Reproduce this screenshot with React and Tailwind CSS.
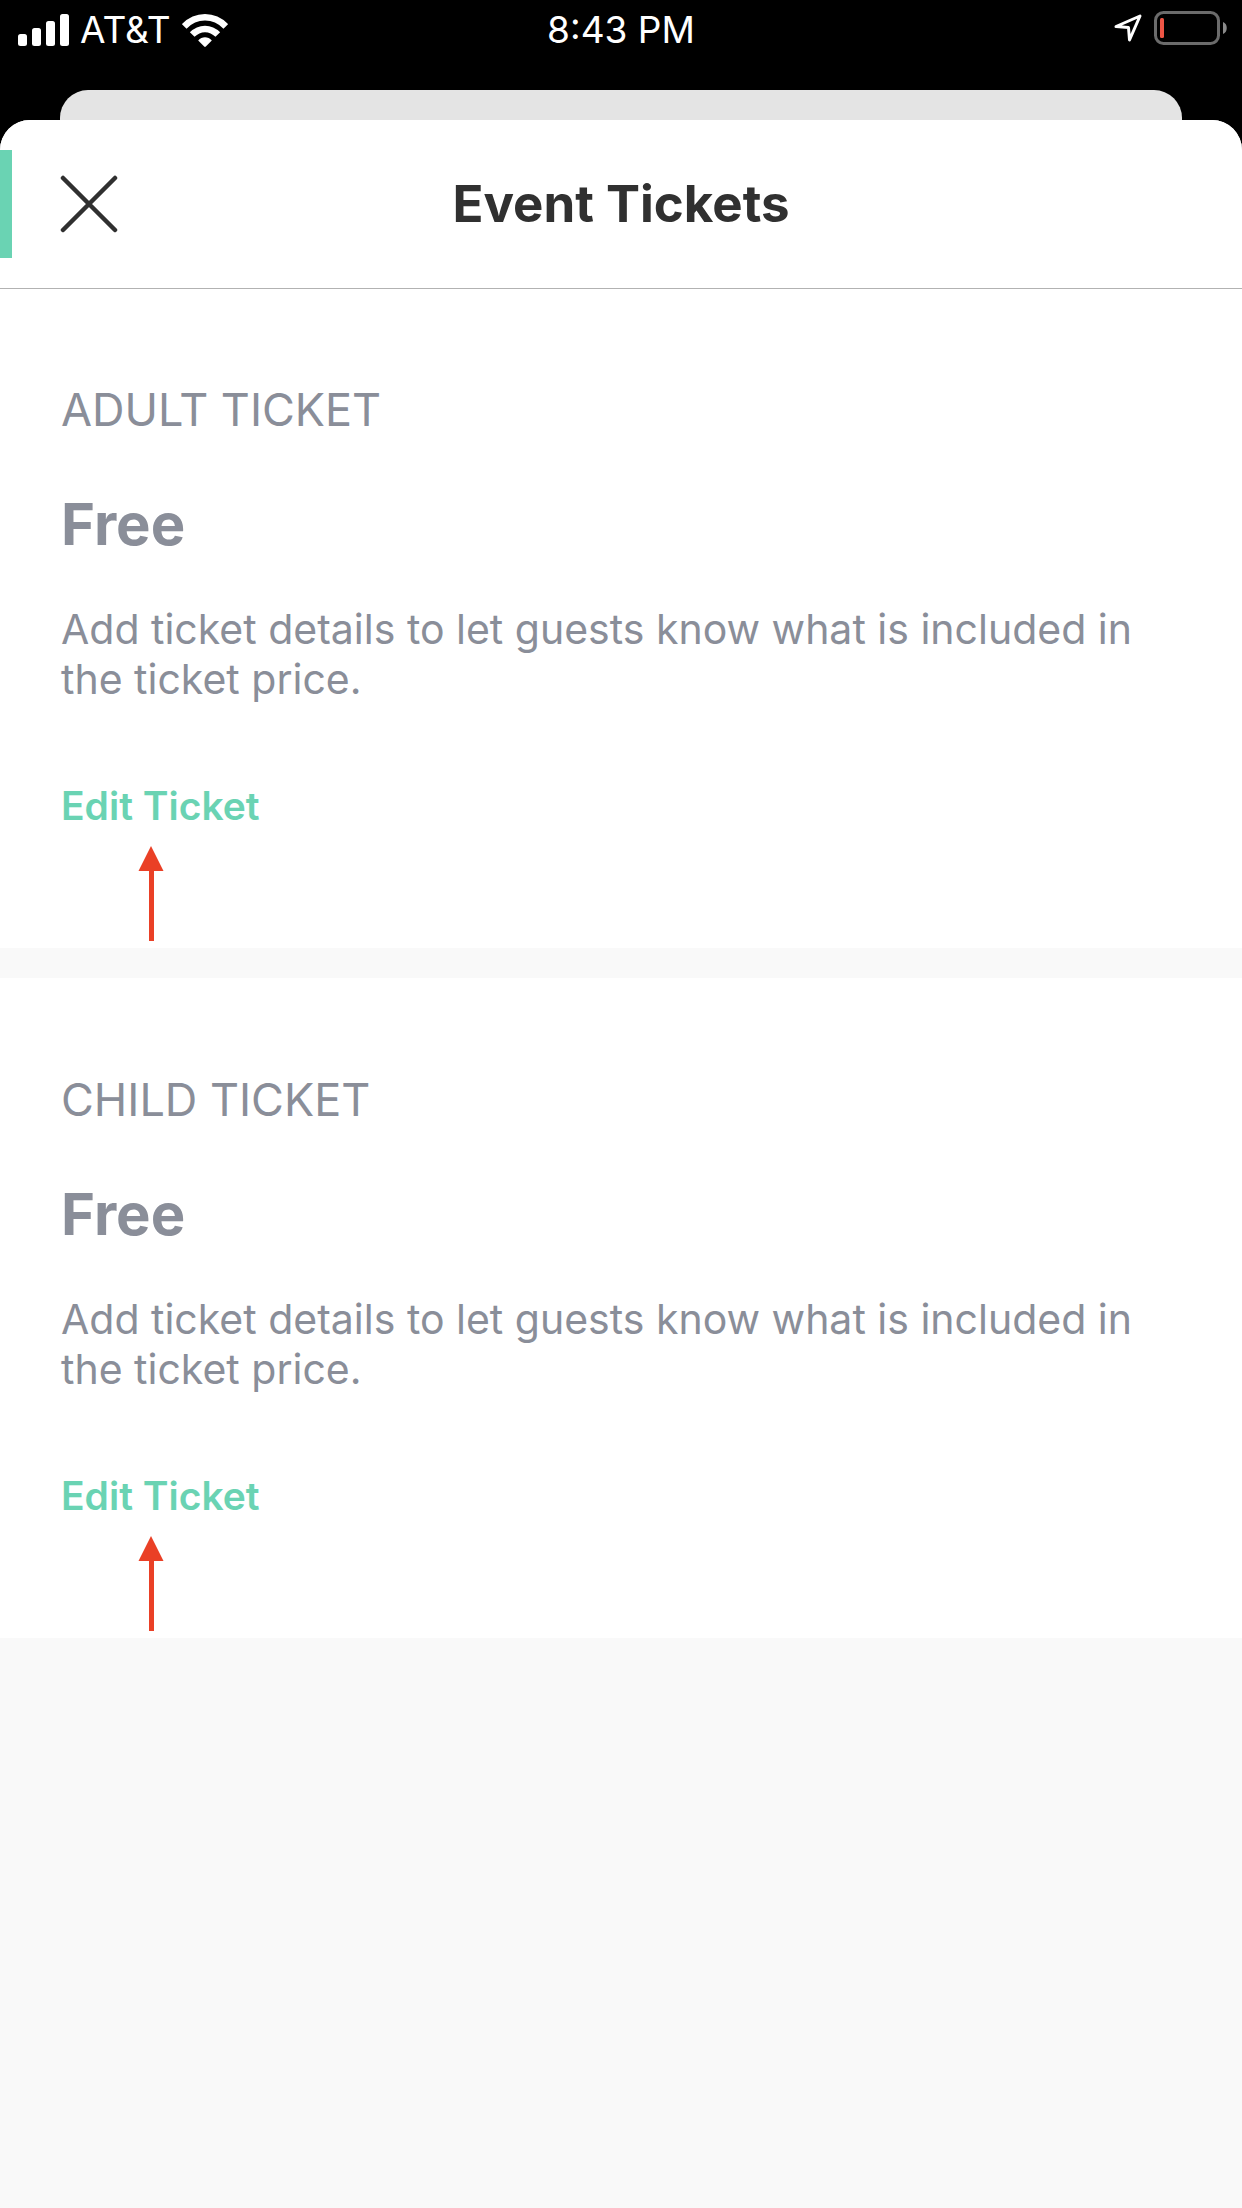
const tickets = [
  { id: "adult", name: "ADULT TICKET", price: "Free" },
  { id: "child", name: "CHILD TICKET", price: "Free" },
];

function SignalIcon() {
  return (
    <svg width="51" height="32" viewBox="0 0 51 32" fill="#fff" aria-hidden="true">
      <rect x="0" y="20" width="9" height="12" rx="2.5" />
      <rect x="14" y="14" width="9" height="18" rx="2.5" />
      <rect x="28" y="7" width="9" height="25" rx="2.5" />
      <rect x="42" y="0" width="9" height="32" rx="2.5" />
    </svg>
  );
}

function WifiIcon() {
  return (
    <svg width="46" height="33" viewBox="0 0 46 33" aria-hidden="true">
      <g fill="none" stroke="#fff" strokeWidth="6.5">
        <path d="M2.2 12.4C14 .2 32 .2 43.8 12.4" />
        <path d="M10.2 20.6C17.5 13 28.5 13 35.8 20.6" />
      </g>
      <path d="M16.2 26.5C20 22.3 26 22.3 29.8 26.5L23.8 32.6Q23 33.3 22.2 32.6Z" fill="#fff" />
    </svg>
  );
}

function LocationIcon() {
  return (
    <svg width="28" height="28" viewBox="0 0 28 28" fill="none" stroke="#fff" strokeWidth="3" strokeLinejoin="round" aria-hidden="true">
      <path d="M2 12.5L26 2L15.5 26L14.5 13.5Z" />
    </svg>
  );
}

function BatteryIcon() {
  return (
    <svg width="74" height="34" viewBox="0 0 74 34" aria-hidden="true">
      <rect x="1.5" y="1.5" width="63" height="31" rx="8" fill="none" stroke="#6b6b6b" strokeWidth="3" />
      <rect x="6" y="7" width="4" height="20" rx="1.5" fill="#ee5545" />
      <path d="M69 11C74 12.5 74 21.5 69 23Z" fill="#8a8a8a" />
    </svg>
  );
}

function StatusBar() {
  return (
    <div className="grid h-[60px] grid-cols-3 items-start px-3.5 pt-[11px] text-[37px] leading-[38px] text-white">
      <div className="flex items-center gap-[11px] pl-1">
        <SignalIcon />
        <span>AT&amp;T</span>
        <WifiIcon />
      </div>
      <time className="text-center">8:43 PM</time>
      <div className="flex items-center justify-end gap-3">
        <LocationIcon />
        <BatteryIcon />
      </div>
    </div>
  );
}

function UpArrow() {
  return (
    <svg className="absolute top-[558px] left-[138px]" width="26" height="95" viewBox="0 0 26 95" fill="#ea4026" aria-hidden="true">
      <path d="M13 0L25.5 25H16V95H11V25H.5Z" />
    </svg>
  );
}

function Ticket({ ticket }) {
  return (
    <section className="relative bg-white px-[61px] pt-24 pb-[120px] text-[#8a8e99]" aria-labelledby={ticket.id}>
      <h2 id={ticket.id} className="text-[45px] leading-[52px]">{ticket.name}</h2>
      <p className="mt-14 text-[58px] leading-[64px] font-bold">{ticket.price}</p>
      <p className="mt-12 text-[41px] leading-[50px]">
        Add ticket details to let guests know what is included in the ticket price.
      </p>
      <button type="button" className="mt-20 block text-[39px] leading-[44px] font-semibold text-[#6ad3b3]">
        Edit Ticket
      </button>
      <UpArrow />
    </section>
  );
}

export default function App() {
  return (
    <div className="flex min-h-screen flex-col bg-black font-['Inter',sans-serif]">
      <StatusBar />
      <div className="mx-[60px] mt-[30px] h-[30px] rounded-t-[28px] bg-[#e4e4e4]" />
      <main className="flex-1 overflow-hidden rounded-t-[30px] bg-[#f9f9f9]">
        <header className="relative z-10 bg-white py-[30px] shadow-[0_1px_0_#b2b2b2]">
          <div className="grid h-[108px] grid-cols-[1fr_auto_1fr] items-center border-l-12 border-[#6ad3b3] pr-3">
            <button type="button" aria-label="Close" className="ml-12 justify-self-start">
              <svg width="58" height="58" viewBox="0 0 58 58" stroke="#303030" strokeWidth="4.5" strokeLinecap="round">
                <path d="M3 3L55 55M55 3L3 55" />
              </svg>
            </button>
            <h1 className="text-[51px] leading-[60px] font-bold text-[#303030]">Event Tickets</h1>
          </div>
        </header>
        <div className="flex flex-col gap-[30px]">
          {tickets.map((ticket) => (
            <Ticket key={ticket.id} ticket={ticket} />
          ))}
        </div>
      </main>
    </div>
  );
}
